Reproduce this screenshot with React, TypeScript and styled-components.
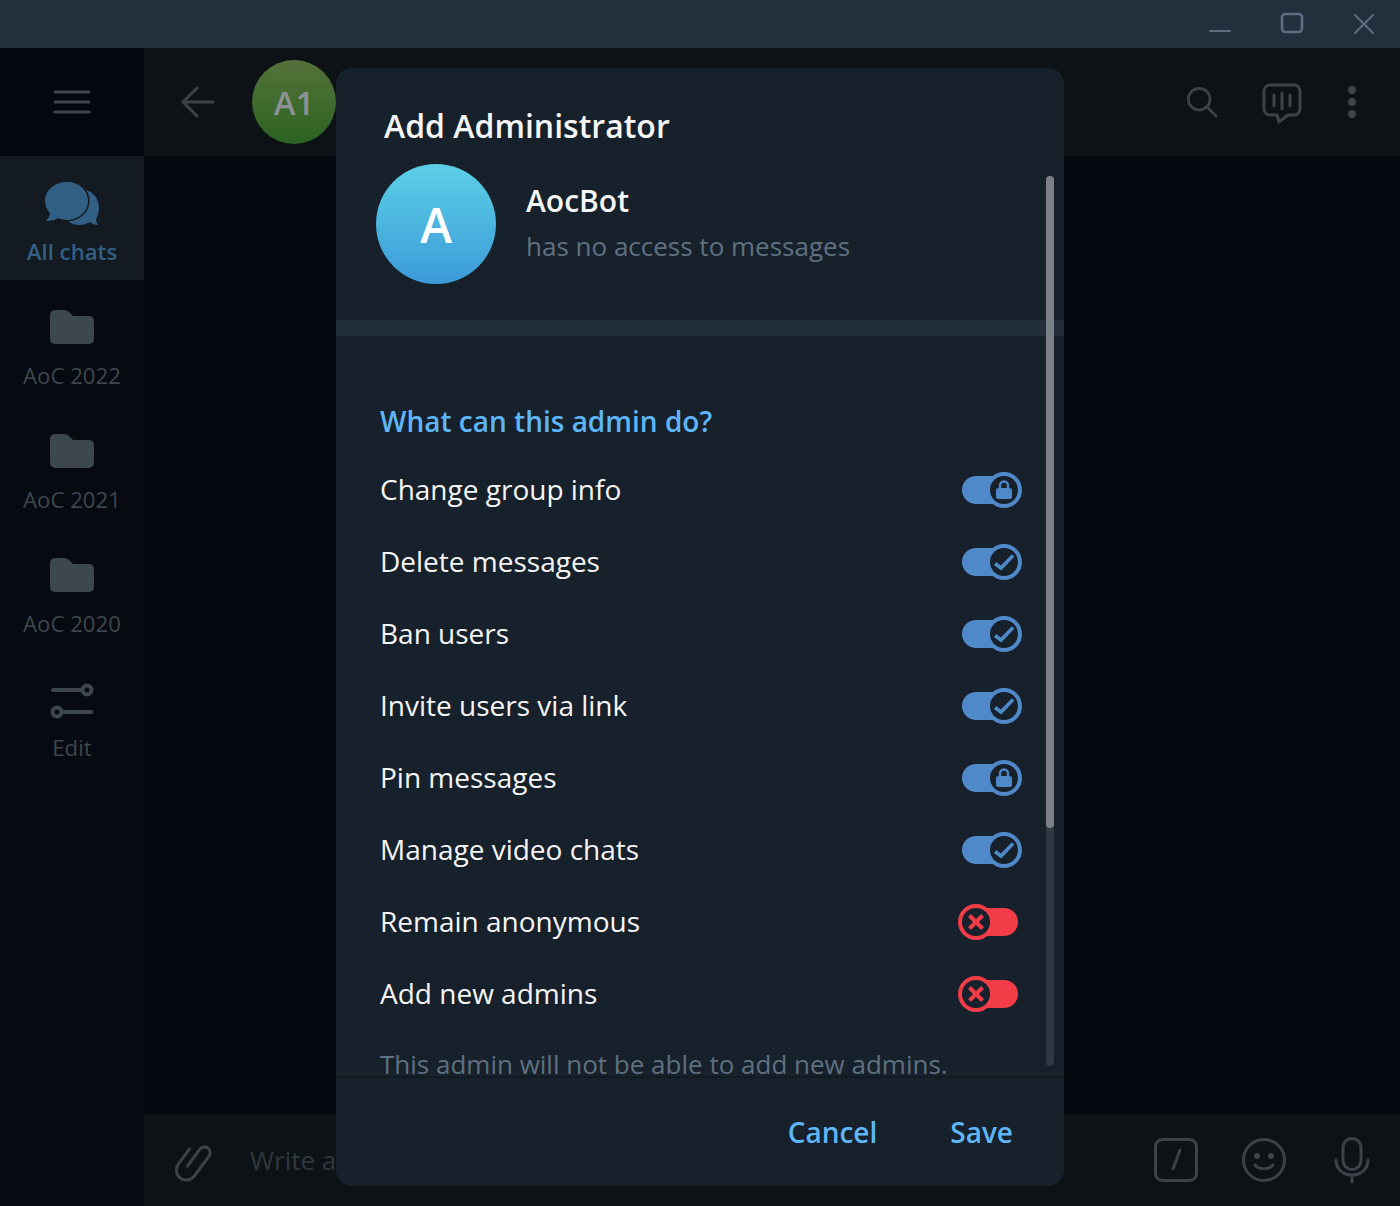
import React from 'react';
import styled, { createGlobalStyle } from 'styled-components';

const GlobalStyle = createGlobalStyle`
  html, body {
    margin: 0;
    padding: 0;
    background: #05080e;
    font-family: "Open Sans", "Noto Sans", sans-serif;
  }
  * { box-sizing: border-box; }
`;

const Shell = styled.div`
  position: relative;
  width: 1400px;
  height: 1206px;
  overflow: hidden;
  display: flex;
  flex-direction: column;
  background: #05080e;
`;

const TitleBar = styled.div`
  height: 48px;
  flex: none;
  background: #242f3d;
  display: flex;
  justify-content: flex-end;
`;

const WinButton = styled.div`
  width: 72px;
  height: 48px;
  display: flex;
  align-items: center;
  justify-content: center;
  color: #5e6e80;
`;

const Workspace = styled.div`
  flex: 1;
  display: flex;
  min-height: 0;
`;

const Sidebar = styled.div`
  width: 144px;
  flex: none;
  background: #070a10;
  display: flex;
  flex-direction: column;
`;

const MenuButton = styled.div`
  height: 108px;
  background: #05080e;
  display: flex;
  align-items: center;
  justify-content: center;
  color: #40464c;
`;

const FolderItem = styled.div<{ $active?: boolean }>`
  height: 124px;
  display: flex;
  flex-direction: column;
  align-items: center;
  padding-top: 23px;
  background: ${(p) => (p.$active ? '#141a21' : 'transparent')};
  color: ${(p) => (p.$active ? '#326084' : '#3d474f')};
  font-weight: ${(p) => (p.$active ? 600 : 400)};
`;

const FolderIcon = styled.div`
  height: 48px;
  display: flex;
  align-items: center;
  justify-content: center;
`;

const FolderLabel = styled.div`
  margin-top: 9px;
  font-size: 22.2px;
  line-height: 32px;
  white-space: nowrap;
`;

const Main = styled.div`
  flex: 1;
  display: flex;
  flex-direction: column;
  min-width: 0;
`;

const ChatHeader = styled.div`
  height: 108px;
  flex: none;
  background: #0d1216;
  display: flex;
  align-items: center;
  color: #3c4247;
`;

const IconSlot = styled.div<{ $w: number }>`
  width: ${(p) => p.$w}px;
  flex: none;
  display: flex;
  align-items: center;
  justify-content: center;
`;

const PeerAvatar = styled.div`
  width: 84px;
  height: 84px;
  border-radius: 50%;
  flex: none;
  background: linear-gradient(180deg, #55723b, #2a6322);
  color: #8d9395;
  font-size: 33px;
  font-weight: 600;
  display: flex;
  align-items: center;
  justify-content: center;
`;

const Spacer = styled.div`
  flex: 1;
`;

const ChatBody = styled.div`
  flex: 1;
`;

const Composer = styled.div`
  height: 92px;
  flex: none;
  background: #0d1216;
  display: flex;
  align-items: center;
  padding-right: 4px;
  color: #3c4247;
`;

const Placeholder = styled.div`
  font-size: 26px;
  color: #30383f;
  white-space: nowrap;
  margin-left: 10px;
`;

const Modal = styled.div`
  position: absolute;
  left: 336px;
  top: 68px;
  width: 728px;
  height: 1118px;
  background: #17212b;
  border-radius: 16px;
  overflow: hidden;
  display: flex;
  flex-direction: column;
`;

const ModalScroll = styled.div`
  flex: 1;
  min-height: 0;
  overflow: hidden;
`;

const ModalTitle = styled.div`
  padding: 36px 48px 0;
  font-size: 32px;
  line-height: 44px;
  font-weight: 600;
  color: #f5f5f5;
`;

const Profile = styled.div`
  display: flex;
  align-items: center;
  gap: 30px;
  padding: 16px 40px 36px;
`;

const BotAvatar = styled.div`
  width: 120px;
  height: 120px;
  border-radius: 50%;
  flex: none;
  background: linear-gradient(180deg, #5ccfe6, #3b9ad9);
  color: #fff;
  font-size: 48px;
  font-weight: 600;
  display: flex;
  align-items: center;
  justify-content: center;
`;

const ProfileText = styled.div`
  display: flex;
  flex-direction: column;
  gap: 5px;
  margin-top: -2px;
`;

const BotName = styled.div`
  font-size: 30px;
  line-height: 40px;
  font-weight: 600;
  color: #f5f5f5;
`;

const BotStatus = styled.div`
  font-size: 26px;
  line-height: 40px;
  color: #5f7080;
`;

const Divider = styled.div`
  height: 16px;
  background: #232e3c;
`;

const Section = styled.div`
  padding: 66px 46px 0 44px;
`;

const SectionTitle = styled.div`
  font-size: 28px;
  line-height: 38px;
  font-weight: 600;
  color: #5eb5f7;
  margin-bottom: 14px;
`;

const Row = styled.div`
  height: 72px;
  display: flex;
  align-items: center;
  justify-content: space-between;
`;

const RowLabel = styled.div`
  font-size: 28px;
  margin-bottom: 2px;
  color: #f5f5f5;
`;

const Note = styled.div`
  margin-top: 14px;
  font-size: 26px;
  line-height: 40px;
  color: #5f7080;
  white-space: nowrap;
`;

const Track = styled.div<{ $on: boolean }>`
  position: relative;
  width: 56px;
  height: 28px;
  border-radius: 14px;
  background: ${(p) => (p.$on ? '#4f89c9' : '#f23c48')};
`;

const Knob = styled.div<{ $on: boolean }>`
  position: absolute;
  top: -4px;
  ${(p) => (p.$on ? 'right: -4px;' : 'left: -4px;')}
  width: 36px;
  height: 36px;
  border-radius: 50%;
  border: 4px solid ${(p) => (p.$on ? '#4f89c9' : '#f23c48')};
  background: #17212b;
  color: ${(p) => (p.$on ? '#4f89c9' : '#f23c48')};
  display: flex;
  align-items: center;
  justify-content: center;
`;

const Footer = styled.div`
  height: 110px;
  flex: none;
  border-top: 2px solid #121a22;
  display: flex;
  align-items: center;
  justify-content: flex-end;
  gap: 73px;
  padding: 0 51px 0 0;
`;

const FooterButton = styled.button`
  border: none;
  background: none;
  padding: 0;
  font-family: inherit;
  font-size: 28px;
  font-weight: 600;
  color: #5eb5f7;
  cursor: pointer;
`;

const ScrollTrack = styled.div`
  position: absolute;
  left: 710px;
  top: 108px;
  width: 8px;
  height: 890px;
  border-radius: 4px;
  background: #2f3843;
`;

const ScrollThumb = styled.div`
  width: 8px;
  height: 652px;
  border-radius: 4px;
  background: #7b7f86;
`;

const Lock = () => (
  <svg width="20" height="22" viewBox="0 0 20 22">
    <path d="M6 11V6.5a4 4 0 0 1 8 0V11" fill="none" stroke="currentColor" strokeWidth="2.4" />
    <rect x="2" y="9" width="16" height="11" rx="2.5" fill="currentColor" />
  </svg>
);

const Check = () => (
  <svg width="24" height="24" viewBox="0 0 24 24" fill="none" stroke="currentColor" strokeWidth="3.6">
    <path d="M3 13.5l6 4.5L21 5.5" />
  </svg>
);

const Cross = () => (
  <svg width="20" height="20" viewBox="0 0 20 20" fill="none" stroke="currentColor" strokeWidth="4">
    <path d="M3.5 3.5l13 13M16.5 3.5l-13 13" />
  </svg>
);

type Perm = { label: string; state: 'lock' | 'check' | 'off' };

const perms: Perm[] = [
  { label: 'Change group info', state: 'lock' },
  { label: 'Delete messages', state: 'check' },
  { label: 'Ban users', state: 'check' },
  { label: 'Invite users via link', state: 'check' },
  { label: 'Pin messages', state: 'lock' },
  { label: 'Manage video chats', state: 'check' },
  { label: 'Remain anonymous', state: 'off' },
  { label: 'Add new admins', state: 'off' },
];

const FolderGlyph = () => (
  <svg width="44" height="34" viewBox="0 0 44 34">
    <path d="M0 5a5 5 0 0 1 5-5h9c3 0 4 1 6 3s2 3 5 3h14a5 5 0 0 1 5 5v18a5 5 0 0 1-5 5H5a5 5 0 0 1-5-5z" fill="currentColor" />
  </svg>
);

export default function App() {
  return (
    <Shell>
      <GlobalStyle />
      <TitleBar>
        <WinButton>
          <svg width="24" height="24" viewBox="0 0 24 24">
            <path d="M2 19h20" stroke="currentColor" strokeWidth="2" strokeLinecap="round" />
          </svg>
        </WinButton>
        <WinButton>
          <svg width="24" height="24" viewBox="0 0 24 24">
            <rect x="2" y="2" width="20" height="18" rx="3.5" fill="none" stroke="currentColor" strokeWidth="2.6" />
          </svg>
        </WinButton>
        <WinButton>
          <svg width="24" height="24" viewBox="0 0 24 24">
            <path d="M3 3l18 18M21 3L3 21" stroke="currentColor" strokeWidth="2" strokeLinecap="round" />
          </svg>
        </WinButton>
      </TitleBar>
      <Workspace>
        <Sidebar>
          <MenuButton>
            <svg width="38" height="28" viewBox="0 0 38 28">
              <path d="M2 4h34M2 14h34M2 24h34" stroke="currentColor" strokeWidth="3" strokeLinecap="round" />
            </svg>
          </MenuButton>
          <FolderItem $active>
            <FolderIcon>
              <svg width="56" height="46" viewBox="0 0 56 46">
                <path d="M41 10c8 1 14 9 14 18 0 5-2 9-3 11 0 2 1 4 2 6-3 0-6-1-8-3-3 2-7 3-11 3-5 0-9-2-12-5 12-3 20-12 18-30z" fill="currentColor" />
                <path d="M22 1c12 0 21 8 21 19 0 10-9 19-21 19-3 0-6-1-9-2-2 2-7 3-12 3 2-2 4-5 4-8-3-3-5-7-5-12C0 9 10 1 22 1z" fill="currentColor" stroke="#141a21" strokeWidth="3" paintOrder="stroke" transform="translate(1 1)" />
              </svg>
            </FolderIcon>
            <FolderLabel>All chats</FolderLabel>
          </FolderItem>
          {['AoC 2022', 'AoC 2021', 'AoC 2020'].map((name) => (
            <FolderItem key={name}>
              <FolderIcon>
                <FolderGlyph />
              </FolderIcon>
              <FolderLabel>{name}</FolderLabel>
            </FolderItem>
          ))}
          <FolderItem>
            <FolderIcon>
              <svg width="44" height="40" viewBox="0 -2 44 40" fill="none" stroke="currentColor" strokeWidth="4">
                <path d="M3 9h29M41 31H12" strokeLinecap="round" />
                <circle cx="37" cy="9" r="4.5" />
                <circle cx="7" cy="31" r="4.5" />
              </svg>
            </FolderIcon>
            <FolderLabel>Edit</FolderLabel>
          </FolderItem>
        </Sidebar>
        <Main>
          <ChatHeader>
            <IconSlot $w={108}>
              <svg width="34" height="32" viewBox="0 0 34 32" fill="none" stroke="currentColor" strokeWidth="3" strokeLinecap="round" strokeLinejoin="round">
                <path d="M32 16H3M16 2L2 16l14 14" />
              </svg>
            </IconSlot>
            <PeerAvatar>A1</PeerAvatar>
            <Spacer />
            <IconSlot $w={116}>
              <svg width="32" height="32" viewBox="0 0 34 34" fill="none" stroke="currentColor" strokeWidth="3" strokeLinecap="round">
                <circle cx="14" cy="14" r="11.5" />
                <path d="M22.5 22.5L32 32" />
              </svg>
            </IconSlot>
            <IconSlot $w={44}>
              <svg width="40" height="44" viewBox="0 -3 40 44" fill="none" stroke="currentColor" strokeWidth="3" strokeLinecap="round" strokeLinejoin="round">
                <path d="M8 2h24a6 6 0 0 1 6 6v18a6 6 0 0 1-6 6h-6l-9 7-2-7H8a6 6 0 0 1-6-6V8a6 6 0 0 1 6-6z" />
                <path d="M12 12v11M20 10v16M28 12v11" />
              </svg>
            </IconSlot>
            <IconSlot $w={96}>
              <svg width="12" height="34" viewBox="0 0 12 34" fill="currentColor">
                <circle cx="6" cy="5" r="4" />
                <circle cx="6" cy="17" r="4" />
                <circle cx="6" cy="29" r="4" />
              </svg>
            </IconSlot>
          </ChatHeader>
          <ChatBody />
          <Composer>
            <IconSlot $w={96}>
              <svg width="40" height="46" viewBox="-21 -24 42 48" fill="none" stroke="currentColor" strokeWidth="3.2" strokeLinecap="round" strokeLinejoin="round">
                <path transform="rotate(36)" d="M0 8V-14a6 6 0 0 1 12 0V12a10.5 10.5 0 0 1-21 0V-8" />
              </svg>
            </IconSlot>
            <Placeholder>Write a message...</Placeholder>
            <Spacer />
            <IconSlot $w={88}>
              <svg width="44" height="44" viewBox="0 0 44 44" fill="none" stroke="currentColor" strokeWidth="3" strokeLinecap="round">
                <rect x="1.5" y="1.5" width="41" height="41" rx="7" />
                <path d="M26 12l-7 19" />
              </svg>
            </IconSlot>
            <IconSlot $w={88}>
              <svg width="44" height="44" viewBox="0 0 44 44" fill="none" stroke="currentColor" strokeWidth="3" strokeLinecap="round">
                <circle cx="22" cy="22" r="20.5" />
                <path d="M13 27c4 5 14 5 18 0" />
                <circle cx="15" cy="18" r="3" fill="currentColor" stroke="none" />
                <circle cx="29" cy="18" r="3" fill="currentColor" stroke="none" />
              </svg>
            </IconSlot>
            <IconSlot $w={88}>
              <svg width="36" height="46" viewBox="0 0 36 46" fill="none" stroke="currentColor" strokeWidth="3" strokeLinecap="round">
                <rect x="9" y="1.5" width="18" height="31" rx="9" />
                <path d="M2 23c0 9 7 15 16 15s16-6 16-15M18 38v7" />
              </svg>
            </IconSlot>
          </Composer>
        </Main>
      </Workspace>
      <Modal>
        <ModalScroll>
          <ModalTitle>Add Administrator</ModalTitle>
          <Profile>
            <BotAvatar>A</BotAvatar>
            <ProfileText>
              <BotName>AocBot</BotName>
              <BotStatus>has no access to messages</BotStatus>
            </ProfileText>
          </Profile>
          <Divider />
          <Section>
            <SectionTitle>What can this admin do?</SectionTitle>
            {perms.map((p) => (
              <Row key={p.label}>
                <RowLabel>{p.label}</RowLabel>
                <Track $on={p.state !== 'off'}>
                  <Knob $on={p.state !== 'off'}>
                    {p.state === 'lock' && <Lock />}
                    {p.state === 'check' && <Check />}
                    {p.state === 'off' && <Cross />}
                  </Knob>
                </Track>
              </Row>
            ))}
            <Note>This admin will not be able to add new admins.</Note>
          </Section>
        </ModalScroll>
        <Footer>
          <FooterButton>Cancel</FooterButton>
          <FooterButton>Save</FooterButton>
        </Footer>
        <ScrollTrack>
          <ScrollThumb />
        </ScrollTrack>
      </Modal>
    </Shell>
  );
}
